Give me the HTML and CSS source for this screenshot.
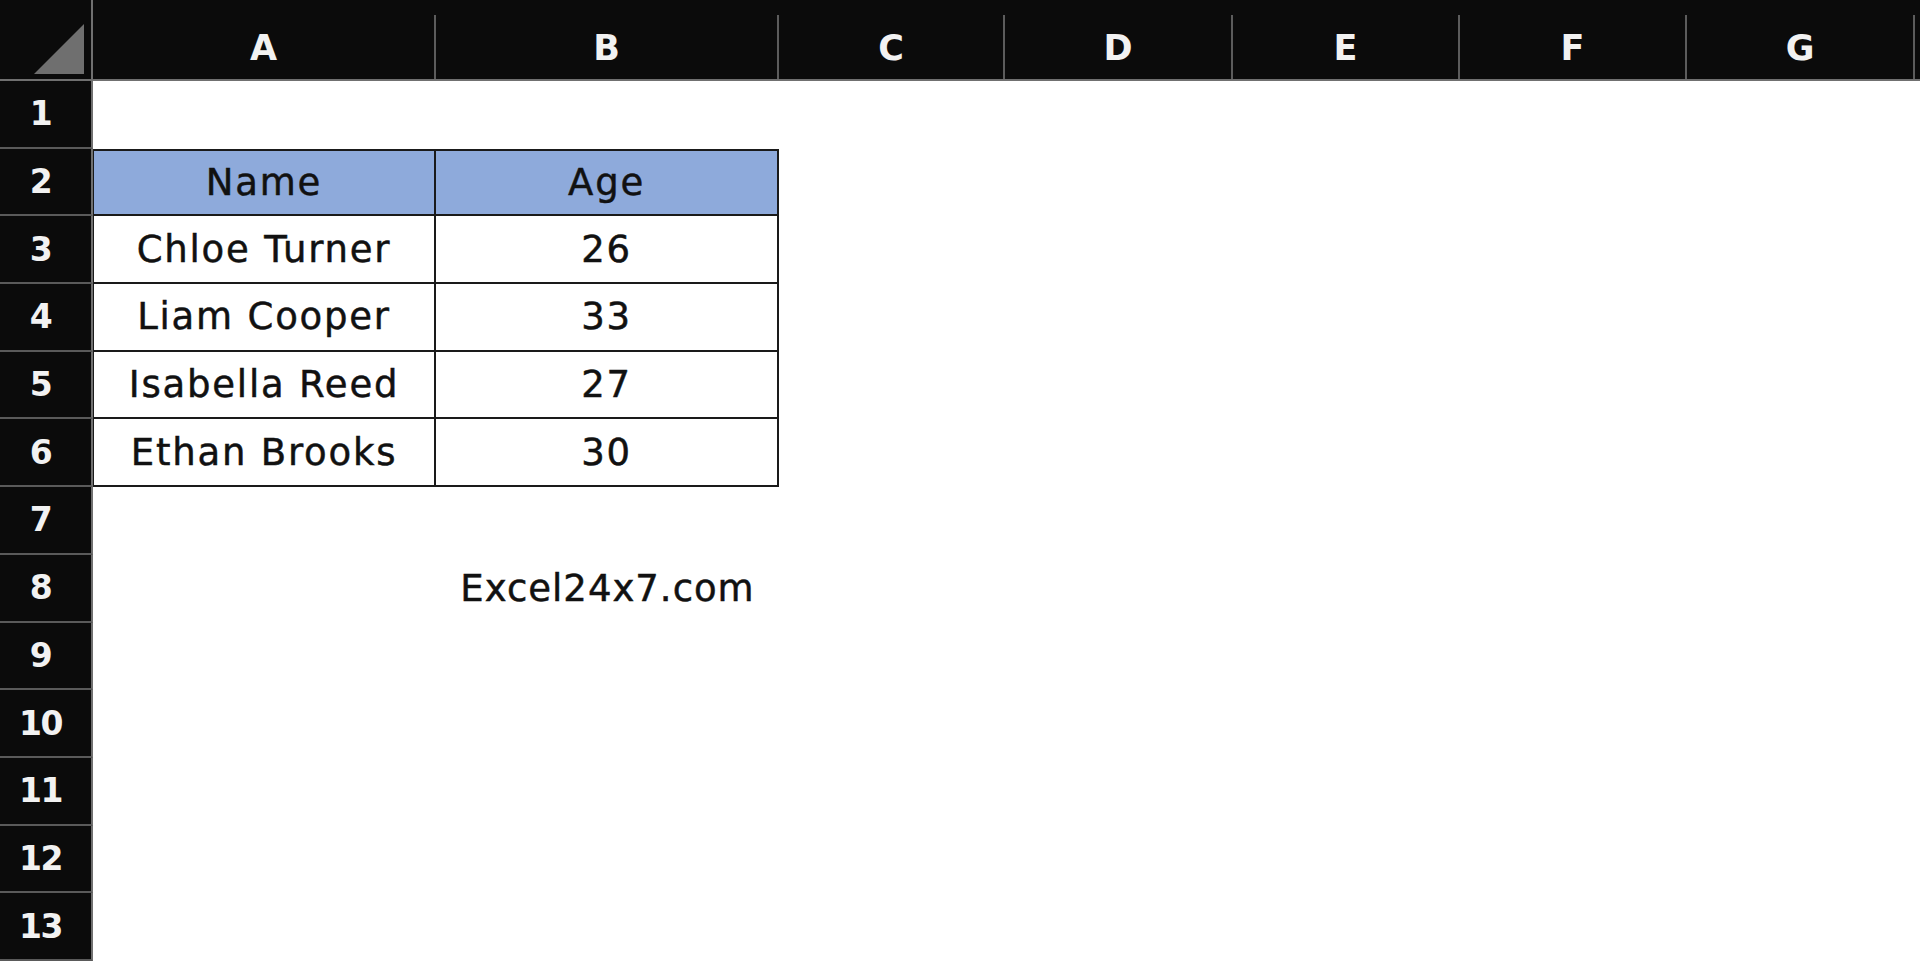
FILE: index.html
```html
<!DOCTYPE html>
<html>
<head>
<meta charset="utf-8">
<link rel="stylesheet" href="styles.css">
</head>
<body>
<div class="sheet">
  <div class="hdr">
    <div class="corner"><svg width="50" height="50" viewBox="0 0 50 50"><polygon points="50,0 50,50 0,50" fill="#6f6f6f"/></svg></div>
    <div class="ch">A</div><div class="ch">B</div><div class="ch">C</div><div class="ch">D</div><div class="ch">E</div><div class="ch">F</div><div class="ch">G</div><div class="ch last"></div>
  </div>
  <div class="row"><div class="rh">1</div><div class="c"></div><div class="c"></div><div class="c"></div><div class="c"></div><div class="c"></div><div class="c"></div><div class="c"></div><div class="c"></div></div>
  <div class="row"><div class="rh">2</div><div class="c t th tl tt">Name</div><div class="c t th tt">Age</div><div class="c"></div><div class="c"></div><div class="c"></div><div class="c"></div><div class="c"></div><div class="c"></div></div>
  <div class="row"><div class="rh">3</div><div class="c t tl">Chloe Turner</div><div class="c t">26</div><div class="c"></div><div class="c"></div><div class="c"></div><div class="c"></div><div class="c"></div><div class="c"></div></div>
  <div class="row"><div class="rh">4</div><div class="c t tl">Liam Cooper</div><div class="c t">33</div><div class="c"></div><div class="c"></div><div class="c"></div><div class="c"></div><div class="c"></div><div class="c"></div></div>
  <div class="row"><div class="rh">5</div><div class="c t tl">Isabella Reed</div><div class="c t">27</div><div class="c"></div><div class="c"></div><div class="c"></div><div class="c"></div><div class="c"></div><div class="c"></div></div>
  <div class="row"><div class="rh">6</div><div class="c t tl">Ethan Brooks</div><div class="c t">30</div><div class="c"></div><div class="c"></div><div class="c"></div><div class="c"></div><div class="c"></div><div class="c"></div></div>
  <div class="row"><div class="rh">7</div><div class="c"></div><div class="c"></div><div class="c"></div><div class="c"></div><div class="c"></div><div class="c"></div><div class="c"></div><div class="c"></div></div>
  <div class="row"><div class="rh">8</div><div class="c"></div><div class="c site">Excel24x7.com</div><div class="c"></div><div class="c"></div><div class="c"></div><div class="c"></div><div class="c"></div><div class="c"></div></div>
  <div class="row"><div class="rh">9</div><div class="c"></div><div class="c"></div><div class="c"></div><div class="c"></div><div class="c"></div><div class="c"></div><div class="c"></div><div class="c"></div></div>
  <div class="row"><div class="rh">10</div><div class="c"></div><div class="c"></div><div class="c"></div><div class="c"></div><div class="c"></div><div class="c"></div><div class="c"></div><div class="c"></div></div>
  <div class="row"><div class="rh">11</div><div class="c"></div><div class="c"></div><div class="c"></div><div class="c"></div><div class="c"></div><div class="c"></div><div class="c"></div><div class="c"></div></div>
  <div class="row"><div class="rh">12</div><div class="c"></div><div class="c"></div><div class="c"></div><div class="c"></div><div class="c"></div><div class="c"></div><div class="c"></div><div class="c"></div></div>
  <div class="row"><div class="rh">13</div><div class="c"></div><div class="c"></div><div class="c"></div><div class="c"></div><div class="c"></div><div class="c"></div><div class="c"></div><div class="c"></div></div>
</div>
</body>
</html>
```
FILE: styles.css
```css
* { box-sizing: border-box; }
html, body { margin: 0; padding: 0; background: #ffffff; }
body { font-family: "DejaVu Sans", "Liberation Sans", sans-serif; }

.sheet {
  --cols: 93px 343px 343px 226px 228px 227px 227px 228px 1fr;
  width: 1920px;
  height: 961px;
  display: flex;
  flex-direction: column;
  overflow: hidden;
}

.hdr {
  height: 81px;
  flex: 0 0 81px;
  display: grid;
  grid-template-columns: var(--cols);
  background: #0b0b0b;
  border-bottom: 2px solid #707070;
}

.corner {
  display: flex;
  align-items: flex-end;
  justify-content: flex-end;
  padding: 0 7px 5px 0;
  border-right: 2px solid #707070;
}

.ch {
  margin-top: 15px;
  border-right: 2px solid #5c5c5c;
  color: #f2f2f2;
  font-size: 35px;
  font-weight: bold;
  display: flex;
  align-items: center;
  justify-content: center;
  padding-top: 1px;
}
.ch.last { border-right: none; }

.row {
  flex: 1 1 0;
  display: grid;
  grid-template-columns: var(--cols);
  min-height: 0;
}

.rh {
  background: #0b0b0b;
  color: #f2f2f2;
  font-size: 33px;
  font-weight: bold;
  border-right: 2px solid #707070;
  border-bottom: 2px solid #5a5a5a;
  display: flex;
  align-items: center;
  justify-content: center;
  padding-right: 10px;
  letter-spacing: -1.5px;
}

.c {
  display: flex;
  align-items: center;
  justify-content: center;
  color: #111111;
  font-size: 37px;
  letter-spacing: 1.8px;
  white-space: nowrap;
  -webkit-text-stroke: 0.5px #111111;
}

.t {
  border-right: 2px solid #1a1a1a;
  border-bottom: 2px solid #1a1a1a;
}
.tt { border-top: 2px solid #1a1a1a; }
.tl { border-left: 1px solid #1a1a1a; }
.th { background: #8eaadb; }

.site { letter-spacing: 1px; }
```
